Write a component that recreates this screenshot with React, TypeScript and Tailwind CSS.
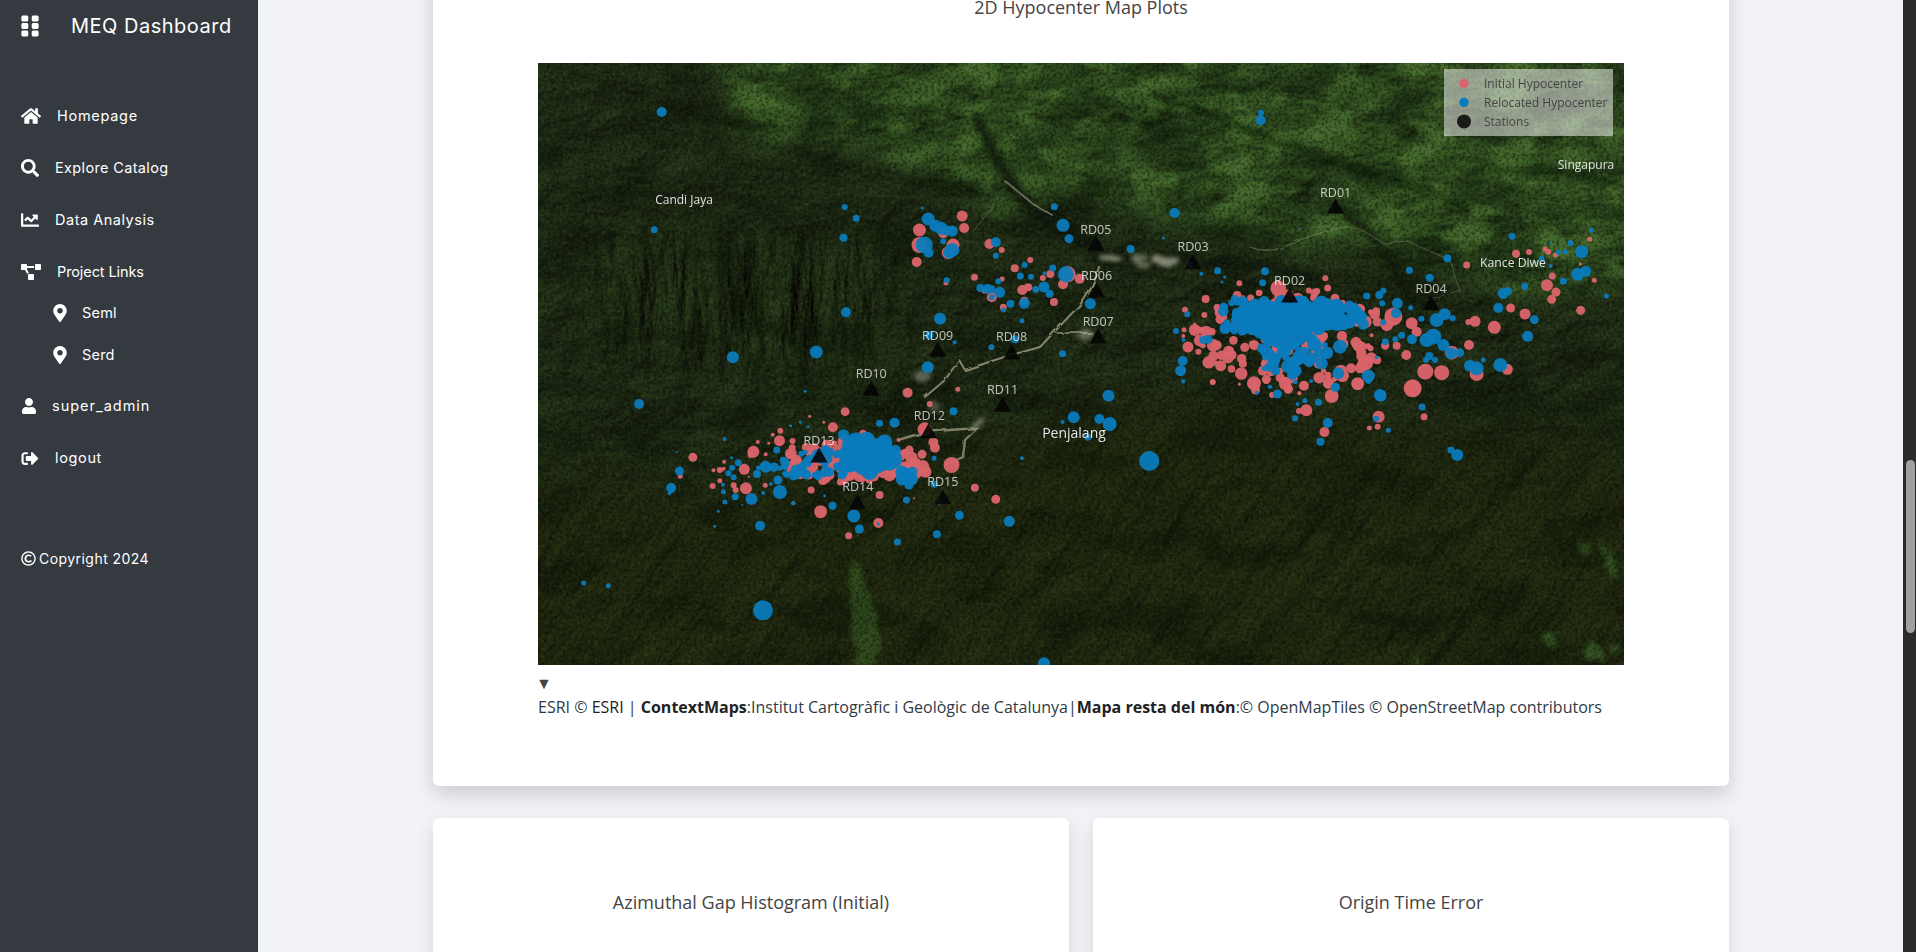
import React from 'react';
import {
  FaChartLine,
  FaGripVertical,
  FaHome,
  FaMapMarkerAlt,
  FaProjectDiagram,
  FaRegCopyright,
  FaSearch,
  FaSignOutAlt,
  FaUser,
} from 'react-icons/fa';

type P = [number, number, number];

// zoomed-crop coordinates converted to map pixels
const a = (x: number, y: number, r: number): P => [612 + x / 3, y / 3 - 3, r];
const b = (x: number, y: number, r: number): P => [x / 2.529 - 8, y / 3 - 3, r];
const c = (x: number, y: number, r: number): P => [x / 2.529 - 8, 337 + y / 3, r];
const d = (x: number, y: number, r: number): P => [612 + x / 2.047, 317 + y / 3, r];

const conv = (fn: (x: number, y: number, r: number) => P, list: number[]) => {
  const out: P[] = [];
  for (let i = 0; i < list.length; i += 3) out.push(fn(list[i], list[i + 1], list[i + 2]));
  return out;
};

const scatter = (seed: number, n: number, cx: number, cy: number, rx: number, ry: number, r0: number, r1: number, fn: typeof a) => {
  let s = seed;
  const rnd = () => {
    s = (s * 1664525 + 1013904223) % 4294967296;
    return s / 4294967296;
  };
  const out: P[] = [];
  for (let i = 0; i < n; i++) {
    const t = rnd() * Math.PI * 2;
    const q = Math.sqrt(rnd());
    out.push(fn(cx + Math.cos(t) * q * rx, cy + Math.sin(t) * q * ry, r0 + rnd() * (r1 - r0)));
  }
  return out;
};

const red: P[] = [
  ...conv(b, [1093,468,5.5,1098,504,5,985,510,6.5,1045,520,5,1070,555,6.5,1058,578,6.5,985,555,8,978,606,5,1162,552,5,1193,570,3,1265,600,3,1226,625,4,1124,652,3.5,1194,657,2.5,1052,669,2.5,1316,642,4,1297,654,3,1390,656,5,1348,673,5,1245,690,5,1260,682,4,1150,692,3,1168,712,5,1250,722,4,1325,726,4,1197,742,3.5,955,998,5,1082,988,2.5,1360,643,8]),
  ...conv(c, [797,35,4.5,1011,12,3,707,49,1.5,743,67,1.5,766,82,5,998,88,7,842,100,3.5,1020,127,5,1024,143,5,932,120,2,631,122,5.5,664,123,3,633,92,3,614,104,2,576,126,2,663,143,3.5,565,155,6,558,165,3,596,163,2,604,130,1.5,412,172,4.5,491,185,2,464,211,2,480,210,3,490,206,2,380,229,2.5,542,208,5.5,480,242,2.5,462,258,3,515,256,3,520,270,3,546,265,6,595,256,2.5,553,230,1,711,270,3.5,1066,195,8,1000,215,6,1125,263,4,1178,298,4.5,884,285,4,971,295,1,735,335,6.5,881,369,5,806,407,3.5,666,310,2]),
  ...scatter(11, 100, 820, 185, 190, 62, 3, 6.5, c),
  ...conv(a, [526,655,3,533,684,3.5,268,670,3,167,717,4,105,749,3,163,765,3,134,791,1.5,102,809,2.5,100,828,2,114,861,5.5,145,875,3,190,888,5,212,917,5.5,188,966,3,268,972,1.5,312,970,7,349,958,4.5,415,987,4.5,462,977,5,448,1000,2,535,968,5.5,545,1008,7,623,971,6.5,603,925,5,647,908,7.5,575,930,5,665,826,2,640,855,2.5,656,856,2,740,857,4,769,885,5,957,855,5,785,790,6,800,815,5,826,935,8,875,938,7.5,788,985,9,905,878,7,980,942,7,1072,928,5.5,1033,802,6.5,975,784,5.5,955,786,3,1125,762,5.5,1082,744,4.5,1098,581,4,1137,576,3,950,615,3.5,1185,567,2.5,1195,575,3,1217,585,2.5,1207,648,3.5,1191,676,6,1218,696,4.5,1205,718,4.5,1333,661,2.5,1292,751,4.5,1319,538,2.5,1291,612,1.5,730,770,9,385,685,8]),
  ...scatter(23, 150, 420, 830, 300, 155, 2.5, 6.5, a),
  ...conv(d, [129,7,2.5,183,14,1,210,12,5,216,30,4.5,238,3,3,250,45,3,283,27,4.5,316,18,3.5,306,40,2,365,12,5,372,50,5,425,12,5.5,538,25,8,305,93,3,320,91,6,468,110,6,561,110,3.5,357,156,5,449,144,2.5,466,140,3]),
];

const blue: P[] = [
  ...conv(b, [333,156,5,796,441,3,825,475,3.5,793,533,4,314,509,3.5,992,444,1.5,1326,440,3.5,1348,496,6.5,1363,536,4.5,1519,567,4,1178,547,5,1178,587,3,1045,544,3,1007,477,6.5,1025,497,6,1040,505,6.5,1055,512,5,1068,513,5.5,997,555,8.5,1008,578,5,1068,570,7,1060,578,6,1251,615,3,1322,624,3.5,1355,643,8,1301,640,2,1240,648,3.5,1267,650,3,1184,664,3,1054,660,3,1139,684,4,1157,687,5,1167,688,4,1188,697,5.5,1279,688,3.5,1300,681,5.5,1314,701,4,1168,712,3,1215,731,4,1250,730,5.5,1198,750,2.5,1417,731,5.5,1244,782,2.5,1037,776,6,799,757,5,1010,825,4,1074,847,2,1227,838,4,1167,862,3,1347,881,3.5,513,892,6,724,876,6.5,1006,922,6,696,994,1.5,276,1032,5,1463,1007,6]),
  ...conv(c, [884,70,3.5,922,68,5,1071,34,4,1375,52,6,1440,57,5,1466,72,7,1347,66,2,1411,112,3.5,1244,175,2,1022,175,2.5,492,117,2,371,156,1,378,213,4.5,357,264,5,353,280,2,511,203,3,527,188,3.5,510,173,1.5,502,220,3,515,232,3,596,200,6,574,222,4,578,204,2.5,488,254,2,489,275,2.5,519,290,3.5,493,306,2.5,476,334,1.5,467,379,1.5,537,314,1,590,279,2,609,252,2,560,297,6,632,276,7,627,240,4.5,582,377,5,745,287,1.5,666,310,2,765,317,4,819,348,6.5,833,387,4.5,929,426,3.5,881,372,1.5,952,300,3.5,1036,305,3,1086,346,4.5,1029,403,4,1212,364,5.5,1022,253,3.5,136,549,2.5,198,557,2.5,589,631,10,1300,790,6,624,150,3.5,793,104,5.5,659,77,1.5,684,67,1.5,703,80,1.5,1566,183,10]),
  ...scatter(37, 60, 720, 190, 120, 45, 2.5, 5, c),
  ...scatter(41, 90, 860, 165, 68, 48, 4, 9.5, c),
  ...scatter(43, 14, 955, 232, 22, 26, 4, 7, c),
  ...scatter(47, 190, 445, 768, 195, 52, 3, 7.5, a),
  ...scatter(49, 40, 360, 790, 60, 50, 5, 9, a),
  ...scatter(53, 70, 420, 880, 115, 65, 2.5, 7, a),
  ...scatter(59, 40, 255, 770, 55, 55, 2.5, 5.5, a),
  ...conv(a, [333,158,3,332,181,5,74,459,5,40,534,1.5,450,506,1,122,615,3,154,641,2,203,632,3.5,224,651,1.5,216,666,1.5,345,634,4,338,668,3.5,1086,529,3.5,1324,511,2.5,1203,549,1.5,1262,549,3,1295,575,6.5,1225,577,2.5,1245,575,2.5,892,595,4,778,631,3.5,839,653,4,1175,597,3,1202,618,2,1155,606,1.5,1110,636,0.8,1283,643,6.5,1307,634,5.5,1240,664,3.5,1124,679,3.5,1369,708,2.5,1060,700,5.5,1074,694,4,1045,744,5,1153,779,4.5,1133,829,5.5,1051,915,7,980,925,7,960,917,6,1000,900,2.5,929,878,4.5,903,880,6,880,855,6,850,830,8,830,840,7,860,780,7,884,763,6,908,775,3,814,776,3,782,743,2.5,742,730,5.5,700,692,3,688,705,4,650,708,3.5,697,730,3,738,760,5,786,838,5,755,826,3.5,736,838,3,706,845,3.5,680,892,2,838,888,4,855,900,3,828,900,3,655,948,6.5,690,1005,6,556,982,4.5,640,793,5.5,700,787,3,112,763,3,78,813,3,100,840,2,160,840,4,175,838,4.5,98,903,5,92,932,5.5,100,964,2,360,980,2,382,1002,4.5,320,998,2,435,966,2,465,1020,2,570,860,7,565,940,6]),
  ...conv(d, [68,5,1.5,261,42,4,245,20,2,298,7,2,330,3,2,447,3,3,472,47,6,557,81,3.5,380,22,4,345,67,3.5,302,72,2,317,62,2.5,221,38,1,297,115,3,463,116,3,364,129,5,349,185,4,488,151,2.5,616,210,3.5,629,225,6]),
];

const st = (name: string, fn: typeof a, lx: number, ly: number, tx: number, ty: number) => {
  const l = fn(lx, ly, 0);
  const t = fn(tx, ty, 0);
  return { name, lx: l[0], ly: l[1], tx: t[0], ty: t[1] };
};

const stations = [
  st('RD01', a, 557, 398, 557, 438),
  st('RD02', a, 419, 660, 419, 705),
  st('RD03', a, 129, 560, 129, 605),
  st('RD04', a, 843, 684, 843, 728),
  st('RD05', b, 1431, 509, 1431, 550),
  st('RD06', b, 1433, 645, 1433, 690),
  st('RD07', b, 1437, 783, 1437, 828),
  st('RD08', b, 1218, 830, 1218, 875),
  st('RD09', b, 1031, 827, 1031, 868),
  st('RD10', b, 863, 940, 863, 985),
  st('RD11', b, 1195, 989, 1195, 1033),
  st('RD12', c, 1010, 47, 1008, 92),
  st('RD13', c, 731, 120, 731, 165),
  st('RD14', c, 829, 258, 828, 305),
  st('RD15', c, 1044, 243, 1044, 290),
];

const HypocenterMap = () => (
  <svg viewBox="0 0 1086 602" className="block h-[602px] w-[1086px]" fontFamily="'Open Sans', sans-serif">
    <defs>
      <filter id="reliefDark" x="0" y="0" width="100%" height="100%" colorInterpolationFilters="sRGB">
        <feTurbulence type="fractalNoise" baseFrequency="0.014 0.02" numOctaves="7" seed="8" />
        <feDiffuseLighting surfaceScale="3.5" diffuseConstant="1" lightingColor="#fff">
          <feDistantLight azimuth="235" elevation="55" />
        </feDiffuseLighting>
        <feColorMatrix values="0.34 0 0 0 -0.155  0 0.5 0 0 -0.24  0 0 0.24 0 -0.11  0 0 0 0 1" />
      </filter>
      <filter id="reliefBright" x="0" y="0" width="100%" height="100%" colorInterpolationFilters="sRGB">
        <feTurbulence type="fractalNoise" baseFrequency="0.009 0.016" numOctaves="7" seed="21" />
        <feDiffuseLighting surfaceScale="5" diffuseConstant="1" lightingColor="#fff">
          <feDistantLight azimuth="235" elevation="55" />
        </feDiffuseLighting>
        <feColorMatrix values="0.5 0 0 0 -0.23  0 0.8 0 0 -0.37  0 0 0.34 0 -0.16  0 0 0 0 1" />
      </filter>
      <filter id="fingers" x="0" y="0" width="100%" height="100%" colorInterpolationFilters="sRGB">
        <feTurbulence type="fractalNoise" baseFrequency="0.03 0.008" numOctaves="6" seed="6" />
        <feDiffuseLighting surfaceScale="6" diffuseConstant="1" lightingColor="#fff">
          <feDistantLight azimuth="200" elevation="55" />
        </feDiffuseLighting>
        <feColorMatrix values="0.32 0 0 0 -0.14  0 0.5 0 0 -0.235  0 0 0.22 0 -0.1  0 0 0 0 1" />
      </filter>
      <filter id="slopes" x="0" y="0" width="100%" height="100%" colorInterpolationFilters="sRGB">
        <feTurbulence type="fractalNoise" baseFrequency="0.03 0.008" numOctaves="7" seed="13" />
        <feDiffuseLighting surfaceScale="4" diffuseConstant="1" lightingColor="#fff">
          <feDistantLight azimuth="250" elevation="55" />
        </feDiffuseLighting>
        <feColorMatrix values="0.36 0 0 0 -0.165  0 0.44 0 0 -0.2  0 0 0.15 0 -0.06  0 0 0 0 1" />
      </filter>
      <filter id="patch" x="0" y="0" width="100%" height="100%" colorInterpolationFilters="sRGB">
        <feTurbulence type="fractalNoise" baseFrequency="0.022 0.036" numOctaves="5" seed="17" />
        <feColorMatrix values="0 0 0 0 0.3  0 0 0 0 0.46  0 0 0 0 0.2  4.5 0 0 0 -2.05" />
      </filter>
      <filter id="blotch" x="0" y="0" width="100%" height="100%" colorInterpolationFilters="sRGB">
        <feTurbulence type="fractalNoise" baseFrequency="0.012 0.028" numOctaves="5" seed="31" />
        <feColorMatrix values="0 0 0 0 0.04  0 0 0 0 0.07  0 0 0 0 0.03  5 0 0 0 -2.45" />
      </filter>
      <filter id="fineDark" x="0" y="0" width="100%" height="100%" colorInterpolationFilters="sRGB">
        <feTurbulence type="fractalNoise" baseFrequency="0.32" numOctaves="2" seed="4" />
        <feColorMatrix values="0 0 0 0 0.02  0 0 0 0 0.04  0 0 0 0 0.01  3.5 0 0 0 -1.5" />
      </filter>
      <filter id="fineLight" x="0" y="0" width="100%" height="100%" colorInterpolationFilters="sRGB">
        <feTurbulence type="fractalNoise" baseFrequency="0.28" numOctaves="2" seed="44" />
        <feColorMatrix values="0 0 0 0 0.32  0 0 0 0 0.42  0 0 0 0 0.16  3.5 0 0 0 -1.75" />
      </filter>
      <filter id="blur30"><feGaussianBlur stdDeviation="30" /></filter>
      <filter id="blur14"><feGaussianBlur stdDeviation="14" /></filter>
      <filter id="rough" x="-5%" y="-5%" width="110%" height="110%">
        <feTurbulence type="fractalNoise" baseFrequency="0.03" numOctaves="4" seed="3" result="n" />
        <feDisplacementMap in="SourceGraphic" in2="n" scale="24" />
        <feGaussianBlur stdDeviation="2.4" />
      </filter>
      <filter id="roughSoft" x="-20%" y="-20%" width="140%" height="140%">
        <feTurbulence type="fractalNoise" baseFrequency="0.05" numOctaves="3" seed="5" result="n" />
        <feDisplacementMap in="SourceGraphic" in2="n" scale="18" />
        <feGaussianBlur stdDeviation="2.2" />
      </filter>
      <filter id="trail" x="-5%" y="-5%" width="110%" height="110%">
        <feTurbulence type="fractalNoise" baseFrequency="0.08" numOctaves="2" seed="2" result="n" />
        <feDisplacementMap in="SourceGraphic" in2="n" scale="4" />
        <feGaussianBlur stdDeviation="0.5" />
      </filter>
      <mask id="topMask">
        <rect width="1086" height="602" fill="black" />
        <path d="M170 -40H1120V215L1000 235L880 200L720 175L590 150L530 125L450 150L330 85L200 70Z" fill="white" filter="url(#blur14)" />
      </mask>
      <mask id="fingerMask">
        <rect width="1086" height="602" fill="black" />
        <path d="M50 180H340L350 290L300 310L70 280Z" fill="white" filter="url(#blur30)" />
      </mask>
      <mask id="slopeMask">
        <rect width="1086" height="602" fill="black" />
        <path d="M-60 420L300 430L600 340L1140 390V660H-60Z" fill="white" filter="url(#blur30)" />
      </mask>
      <clipPath id="frame"><rect width="1086" height="602" /></clipPath>
    </defs>
    <g clipPath="url(#frame)">
      <rect width="1086" height="602" filter="url(#reliefDark)" />
      <rect width="1086" height="602" filter="url(#reliefBright)" mask="url(#topMask)" />
      <rect width="1086" height="602" filter="url(#patch)" mask="url(#topMask)" opacity="0.8" />
      <rect width="1086" height="602" filter="url(#fingers)" mask="url(#fingerMask)" />
      <g mask="url(#slopeMask)">
        <rect x="-300" y="-300" width="1700" height="1300" filter="url(#slopes)" transform="rotate(28 543 301)" />
      </g>
      <rect width="1086" height="602" filter="url(#blotch)" opacity="0.42" />
      {/* valleys */}
      <g fill="none" stroke="#0a1207" strokeLinecap="round" filter="url(#rough)" opacity="0.75">
        <path d="M440 55C455 95 465 105 480 130C500 160 530 160 555 182" strokeWidth="11" />
        <path d="M616 32C660 52 700 58 760 86C800 112 850 100 930 148" strokeWidth="4" />
        <path d="M930 104C970 112 1030 100 1086 122" strokeWidth="3" />
        <path d="M790 140C830 160 850 190 870 232" strokeWidth="6" />
        <path d="M620 196C680 204 720 200 780 216" strokeWidth="11" />
      </g>
      {/* lime clearings */}
      <g fill="#3f6a2c" filter="url(#roughSoft)">
        <path d="M312 500C316 490 322 500 328 525C340 550 346 575 338 602H316C320 570 306 535 312 500Z" opacity="0.5" />
        <ellipse cx="1072" cy="500" rx="5" ry="12" opacity="0.6" />
        <ellipse cx="1066" cy="485" rx="5" ry="6" opacity="0.4" />
        <ellipse cx="1046" cy="484" rx="6" ry="7" opacity="0.5" />
        <ellipse cx="1012" cy="576" rx="5" ry="7" opacity="0.7" />
        <ellipse cx="1052" cy="587" rx="9" ry="10" opacity="0.7" />
        <ellipse cx="1075" cy="584" rx="5" ry="5" opacity="0.7" />
        <ellipse cx="878" cy="598" rx="6" ry="4" opacity="0.6" />
      </g>
      <rect width="1086" height="602" filter="url(#fineDark)" opacity="0.42" />
      <rect width="1086" height="602" filter="url(#fineLight)" opacity="0.18" />
      {/* roads and quarries */}
      <g fill="none" stroke="#b3ad92" strokeLinecap="round" strokeLinejoin="round" filter="url(#trail)">
        <path d="M466 117L494 140L514 152" strokeWidth="1.8" opacity="0.55" />
        <path d="M460 134L447 154L435 168" strokeWidth="1" opacity="0.3" />
        <path d="M561 204C555 225 548 235 540 244L518 267L502 284L463 295L427 307L421 297L407 317L387 334" strokeWidth="2" opacity="0.7" />
        <path d="M518 270H553" strokeWidth="2" opacity="0.55" />
        <path d="M360 377L387 369L411 367L439 365L427 377L425 394L407 402" strokeWidth="2.4" opacity="0.65" />
        <path d="M712 184C730 192 745 185 762 177L785 169" strokeWidth="1.2" opacity="0.4" />
        <path d="M785 169C810 160 820 165 829 170L845 180L869 178L912 197L922 227L889 237" strokeWidth="1" opacity="0.32" />
      </g>
      <g fill="#c6c3ae" filter="url(#roughSoft)">
        <ellipse cx="572" cy="194" rx="11" ry="4" opacity="0.7" />
        <ellipse cx="603" cy="197" rx="9" ry="5" opacity="0.45" />
        <ellipse cx="628" cy="197" rx="14" ry="4" opacity="0.65" />
        <ellipse cx="546" cy="271" rx="10" ry="4" opacity="0.45" />
        <ellipse cx="387" cy="315" rx="11" ry="4" opacity="0.4" />
        <ellipse cx="441" cy="362" rx="10" ry="5" opacity="0.55" />
        <ellipse cx="395" cy="342" rx="7" ry="3" opacity="0.3" />
      </g>
      {/* hypocenters */}
      <g fill="#d9646a" fillOpacity="0.96">
        {red.map((p, i) => <circle key={i} cx={p[0]} cy={p[1]} r={p[2]} />)}
      </g>
      <g fill="#0a7bbc" fillOpacity="0.94">
        {blue.map((p, i) => <circle key={i} cx={p[0]} cy={p[1]} r={p[2]} />)}
      </g>
      {/* stations */}
      {stations.map(s => (
        <g key={s.name}>
          <polygon points={`${s.tx - 8.5},${s.ty + 7.5} ${s.tx + 8.5},${s.ty + 7.5} ${s.tx},${s.ty - 7.5}`} fill="#050505" fillOpacity="0.9" />
          <text x={s.lx} y={s.ly + 4.5} textAnchor="middle" fontSize="12.5" fill="#fff" fillOpacity="0.72">{s.name}</text>
        </g>
      ))}
      {/* city names */}
      <g fill="#fff" textAnchor="middle" stroke="#222" strokeOpacity="0.3" strokeWidth="0.4">
        <text x={146} y={141} fontSize="12">Candi Jaya</text>
        <text x={1048} y={106} fontSize="12">Singapura</text>
        <text x={975} y={204} fontSize="12.2">Kance Diwe</text>
        <text x={536} y={375} fontSize="14">Penjalang</text>
      </g>
      {/* legend */}
      <rect x="906" y="6" width="169" height="67" fill="#fff" fillOpacity="0.5" />
      <circle cx="926" cy="20.5" r="4.7" fill="#d9646a" />
      <circle cx="926" cy="39.5" r="4.7" fill="#0a7bbc" />
      <circle cx="926" cy="58.5" r="7" fill="#0a0a0a" fillOpacity="0.88" />
      <g fontSize="12" fill="#444">
        <text x="946" y="24.5">Initial Hypocenter</text>
        <text x="946" y="43.5">Relocated Hypocenter</text>
        <text x="946" y="62.5">Stations</text>
      </g>
    </g>
  </svg>
);

const NavRow = ({ icon, label, gap, sub, tracking }: { icon: React.ReactNode; label: string; gap: string; sub?: boolean; tracking: string }) => (
  <div className={`flex items-center text-white ${sub ? 'h-[42px] pl-[53px]' : 'h-[52px] pl-[21px]'}`}>
    {icon}
    <span className={`${gap} ${tracking} text-[14.5px]`}>{label}</span>
  </div>
);

const Sidebar = () => (
  <aside className="h-full w-[258px] shrink-0 bg-[#343a40] font-['Inter',sans-serif] text-white">
    <div className="flex h-[52px] items-center pl-[22px]">
      <FaGripVertical className="h-[24px] w-[16px] scale-x-[1.15]" />
      <span className="ml-[33px] text-[20px] tracking-[0.5px]">MEQ Dashboard</span>
    </div>
    <nav className="mt-[38px]">
      <NavRow icon={<FaHome className="h-[18px] w-[20px]" />} label="Homepage" gap="ml-[16px]" tracking="tracking-[0.72px]" />
      <NavRow icon={<FaSearch className="h-[18px] w-[18px]" />} label="Explore Catalog" gap="ml-[16px]" tracking="tracking-[0.35px]" />
      <NavRow icon={<FaChartLine className="h-[18px] w-[18px]" />} label="Data Analysis" gap="ml-[16px]" tracking="tracking-[0.52px]" />
      <NavRow icon={<FaProjectDiagram className="h-[16px] w-[20px]" />} label="Project Links" gap="ml-[16px]" tracking="tracking-[-0.1px]" />
      <div className="-mt-[6px]">
        <NavRow sub icon={<FaMapMarkerAlt className="h-[18px] w-[14px]" />} label="Seml" gap="ml-[15px]" tracking="tracking-[0.2px]" />
        <NavRow sub icon={<FaMapMarkerAlt className="h-[18px] w-[14px]" />} label="Serd" gap="ml-[15px]" tracking="tracking-[0.2px]" />
      </div>
      <div className="mt-[4px]">
        <NavRow icon={<FaUser className="h-[16px] w-[16px]" />} label="super_admin" gap="ml-[15px]" tracking="tracking-[1px]" />
      </div>
      <NavRow icon={<FaSignOutAlt className="h-[17px] w-[18px]" />} label="logout" gap="ml-[16px]" tracking="tracking-[0.65px]" />
    </nav>
    <div className="mt-[60px] flex h-[28px] items-center pl-[21px] text-[14px] tracking-[0.45px]">
      <FaRegCopyright className="h-[15px] w-[15px]" />
      <span className="ml-[3px]">Copyright 2024</span>
    </div>
  </aside>
);

const ChartCard = ({ title }: { title: string }) => (
  <div className="h-[300px] rounded-md bg-white pt-[71px] text-center text-[18px] text-[#444] shadow-[0_6px_18px_rgba(0,0,0,0.12)]">
    {title}
  </div>
);

export default function App() {
  return (
    <div className="flex h-screen w-full overflow-hidden bg-[#f1f3f6] font-['Open_Sans',sans-serif]">
      <Sidebar />
      <main className="min-w-0 flex-1 overflow-hidden">
        <div className="-mt-[40px] ml-[175px] w-[1296px]">
          <section className="rounded-md bg-white px-[105px] pb-[67px] shadow-[0_8px_20px_rgba(0,0,0,0.16)]">
            <h2 className="h-[103px] pt-[35px] text-center text-[18px] leading-[24px] font-normal text-[#444]">
              2D Hypocenter Map Plots
            </h2>
            <HypocenterMap />
            <div className="mt-[9px] -ml-[2px] text-[16px] leading-[18px] text-[#444]">▼</div>
            <p className="mt-[3px] text-[16px] leading-[24px] whitespace-nowrap text-[#2f3a45]">
              ESRI © <span className="text-[#222]">ESRI</span> | <b className="text-[#222]">ContextMaps</b>:Institut Cartogràfic i Geològic de Catalunya|<b className="text-[#222]">Mapa resta del món</b>:© OpenMapTiles © OpenStreetMap contributors
            </p>
          </section>
          <div className="mt-[32px] grid grid-cols-2 gap-[24px]">
            <ChartCard title="Azimuthal Gap Histogram (Initial)" />
            <ChartCard title="Origin Time Error" />
          </div>
        </div>
      </main>
      <div className="h-full w-[13px] shrink-0 bg-[#2b2b2b] pt-[460px] pl-[3px]">
        <div className="h-[173px] w-[9px] rounded-full bg-[#a0a0a0]" />
      </div>
    </div>
  );
}
